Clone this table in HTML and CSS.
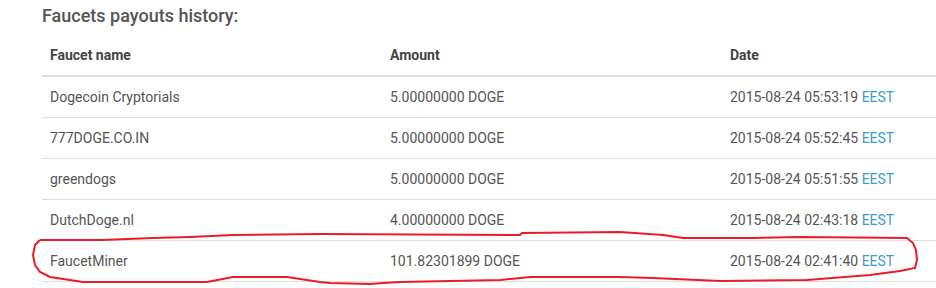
FILE: index.html
```html
<!DOCTYPE html>
<html>
<head>
<meta charset="utf-8">
<link rel="stylesheet" href="styles.css">
</head>
<body>
<div class="page">
  <h3 class="title">Faucets payouts history:</h3>
  <table class="payouts">
    <thead>
      <tr><th>Faucet name</th><th>Amount</th><th>Date</th></tr>
    </thead>
    <tbody>
      <tr><td>Dogecoin Cryptorials</td><td>5.00000000 DOGE</td><td>2015-08-24 05:53:19 <span class="tz">EEST</span></td></tr>
      <tr><td>777DOGE.CO.IN</td><td>5.00000000 DOGE</td><td>2015-08-24 05:52:45 <span class="tz">EEST</span></td></tr>
      <tr><td>greendogs</td><td>5.00000000 DOGE</td><td>2015-08-24 05:51:55 <span class="tz">EEST</span></td></tr>
      <tr><td>DutchDoge.nl</td><td>4.00000000 DOGE</td><td>2015-08-24 02:43:18 <span class="tz">EEST</span></td></tr>
      <tr><td>FaucetMiner</td><td>101.82301899 DOGE</td><td>2015-08-24 02:41:40 <span class="tz">EEST</span></td></tr>
    </tbody>
  </table>
  <svg class="scribble" width="936" height="288" viewBox="0 0 936 288">
    <path d="M40 240 L102 240 L153 238 L190 237 L233 235 L320 234 L520 235 L522 233 L620 232 L663 235 L683 238 L753 238 L800 237 L907 238 L913 243 L916 250 L917 260 L915 268 L900 271 L870 275 L807 280 L720 281 L653 278 L620 277 L530 277 L500 280 L400 282 L383 283 L370 284 L330 283 L320 282 L287 277 L233 277 L207 282 L83 282 L50 277 L40 272 L35 265 L33 255 L35 245 L40 240" />
  </svg>
</div>
</body>
</html>
```
FILE: styles.css
```css
html, body {
  margin: 0;
  padding: 0;
  overflow: hidden;
  background: #fff;
}
.page {
  position: relative;
  width: 936px;
  height: 288px;
  overflow: hidden;
  padding-left: 42px;
  box-sizing: border-box;
  font-family: Roboto, "Liberation Sans", sans-serif;
}
.title {
  margin: 5px 0 8px 0;
  font-size: 18px;
  line-height: 22px;
  font-weight: 500;
  color: #555;
}
.payouts {
  width: 1020px;
  border-collapse: collapse;
  font-size: 14px;
  line-height: 20px;
  color: #555;
}
.payouts th, .payouts td {
  text-align: left;
  padding: 10px 8px;
  width: 324px;
}
.payouts th {
  font-weight: 700;
  color: #444;
  border-bottom: 2px solid #ddd;
}
.payouts td {
  border-top: 1px solid #ddd;
  border-bottom: 1px solid #ddd;
}
.tz {
  color: #3b9bd1;
}
.scribble {
  position: absolute;
  left: 0;
  top: 0;
  fill: none;
  stroke: #ed1c24;
  stroke-width: 2;
}
```
